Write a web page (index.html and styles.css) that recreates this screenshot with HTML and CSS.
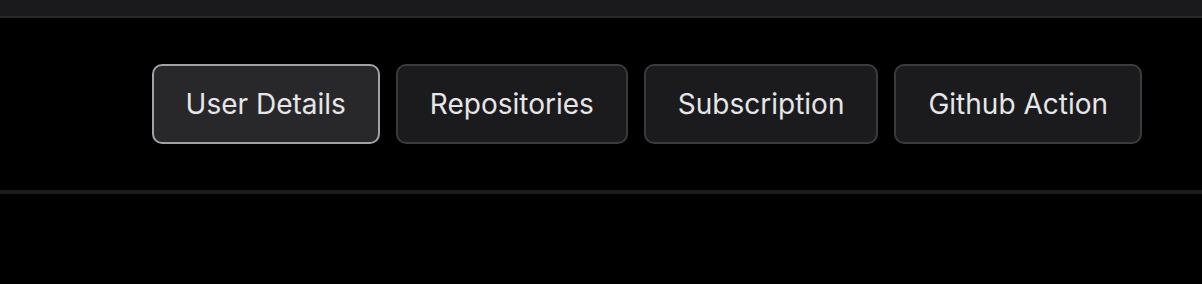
FILE: index.html
```html
<!DOCTYPE html>
<html>
<head>
<meta charset="utf-8">
<link rel="stylesheet" href="styles.css">
</head>
<body>
<div class="topbar"></div>
<div class="tabs">
  <button class="tab active">User Details</button>
  <button class="tab">Repositories</button>
  <button class="tab">Subscription</button>
  <button class="tab">Github Action</button>
</div>
<div class="rest"></div>
</body>
</html>
```
FILE: styles.css
```css
html, body {
  margin: 0;
  padding: 0;
  background: #000;
  width: 1202px;
  height: 284px;
  overflow: hidden;
  font-family: Inter, "Noto Sans", sans-serif;
}
.topbar {
  height: 16px;
  background: #1a1a1c;
  border-bottom: 2px solid #2a2a2d;
}
.tabs {
  display: flex;
  justify-content: flex-end;
  gap: 16px;
  padding: 46px 60px 46px 0;
  border-bottom: 4px solid #1c1c1e;
}
.tab {
  height: 80px;
  padding: 0 32px;
  background: #1b1b1e;
  border: 2px solid #3a3a3f;
  border-radius: 10px;
  color: #e6e6e8;
  font-family: Inter, "Noto Sans", sans-serif;
  font-size: 28px;
  font-weight: 400;
  line-height: 32px;
}
.tab.active {
  background: #28282b;
  border-color: #a1a1a6;
}
.rest {
  height: 90px;
}
```
